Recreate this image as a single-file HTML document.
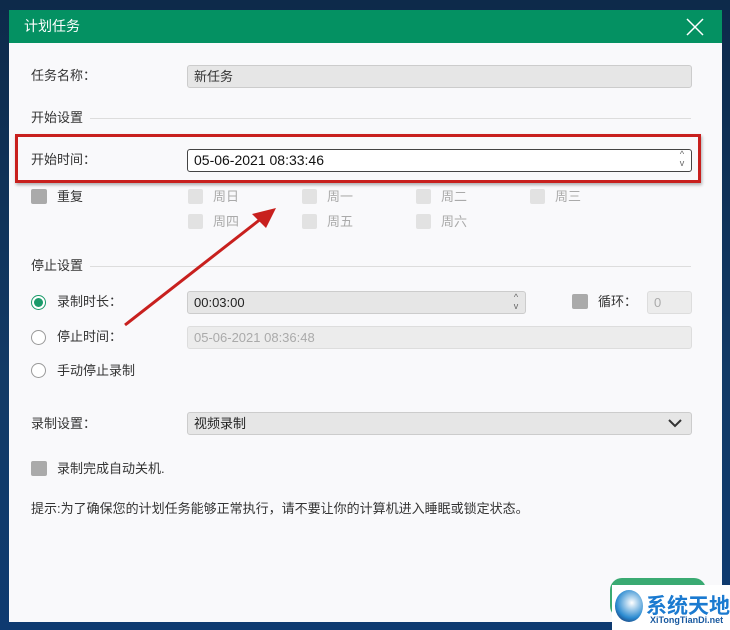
<!DOCTYPE html>
<html><head><meta charset="utf-8"><style>
*{margin:0;padding:0;box-sizing:border-box}
body{width:730px;height:630px;overflow:hidden;background:linear-gradient(180deg,#0d2a4a,#123a66 60%,#0e3a70);font-family:"Liberation Sans","Noto Sans CJK SC",sans-serif;font-size:13px;color:#333;position:relative}
.a{position:absolute}
.dlg{left:9px;top:10px;width:713px;height:612px;background:#f9f9fb}
.hd{left:9px;top:10px;width:713px;height:33px;background:#049162;color:#fff;font-size:14px;line-height:33px;padding-left:15px}
.lbl{line-height:16px}
.inp{border:1px solid #ccc;border-radius:3px;background:#e6e6e6;height:23px;line-height:21px;padding-left:6px}
.cb{width:16px;height:15px;background:#aaa;border-radius:2px}
.cbl{width:15px;height:15px;background:#e2e2e2;border-radius:2px}
.dis{color:#aaa}
.line{height:1px;background:#ddd}
.rd{width:15px;height:15px;border:1px solid #999;border-radius:50%;background:#fff}
.sp{font-size:9px;color:#666;line-height:9px;text-align:center;width:10px}
</style></head><body>
<div class="a dlg"></div>
<div class="a hd">计划任务</div>
<svg class="a" style="left:686px;top:18px" width="18" height="18"><path d="M1 1L17 17M17 1L1 17" stroke="#fff" stroke-width="1.5"/></svg>
<div class="a lbl" style="left:31px;top:68px">任务名称：</div>
<div class="a inp" style="left:187px;top:65px;width:505px">新任务</div>
<div class="a lbl" style="left:31px;top:110px">开始设置</div>
<div class="a line" style="left:90px;top:118px;width:601px"></div>
<div class="a" style="left:15px;top:134px;width:686px;height:49px;border:3px solid #c8201e;box-shadow:1px 2px 3px rgba(0,0,0,.3)"></div>
<div class="a lbl" style="left:31px;top:152px">开始时间：</div>
<div class="a inp" style="left:187px;top:149px;width:505px;background:#fff;border-color:#444;color:#111;font-size:14px">05-06-2021 08:33:46</div>
<div class="a sp" style="left:677px;top:150px">^<br>v</div>
<div class="a cb" style="left:31px;top:189px"></div><div class="a lbl" style="left:57px;top:189px">重复</div>
<div class="a cbl" style="left:188px;top:189px"></div><div class="a lbl dis" style="left:213px;top:189px">周日</div>
<div class="a cbl" style="left:302px;top:189px"></div><div class="a lbl dis" style="left:327px;top:189px">周一</div>
<div class="a cbl" style="left:416px;top:189px"></div><div class="a lbl dis" style="left:441px;top:189px">周二</div>
<div class="a cbl" style="left:530px;top:189px"></div><div class="a lbl dis" style="left:555px;top:189px">周三</div>
<div class="a cbl" style="left:188px;top:214px"></div><div class="a lbl dis" style="left:213px;top:214px">周四</div>
<div class="a cbl" style="left:302px;top:214px"></div><div class="a lbl dis" style="left:327px;top:214px">周五</div>
<div class="a cbl" style="left:416px;top:214px"></div><div class="a lbl dis" style="left:441px;top:214px">周六</div>
<div class="a lbl" style="left:31px;top:258px">停止设置</div>
<div class="a line" style="left:90px;top:266px;width:601px"></div>
<div class="a rd" style="left:31px;top:295px;border-color:#1a9a6a"><div style="width:9px;height:9px;margin:2px;border-radius:50%;background:#1a9a6a"></div></div>
<div class="a lbl" style="left:57px;top:294px">录制时长：</div>
<div class="a inp" style="left:187px;top:291px;width:339px;color:#222">00:03:00</div>
<div class="a sp" style="left:511px;top:293px">^<br>v</div>
<div class="a cb" style="left:572px;top:294px"></div><div class="a lbl" style="left:598px;top:294px">循环：</div>
<div class="a inp dis" style="left:647px;top:291px;width:45px;background:#ececec;border-color:#ddd">0</div>
<div class="a rd" style="left:31px;top:330px"></div>
<div class="a lbl" style="left:57px;top:329px">停止时间：</div>
<div class="a inp dis" style="left:187px;top:326px;width:505px;background:#ececec;border-color:#ddd">05-06-2021 08:36:48</div>
<div class="a rd" style="left:31px;top:363px"></div>
<div class="a lbl" style="left:57px;top:363px">手动停止录制</div>
<div class="a lbl" style="left:31px;top:416px">录制设置：</div>
<div class="a inp" style="left:187px;top:412px;width:505px;color:#222">视频录制</div>
<svg class="a" style="left:668px;top:418px" width="14" height="10"><path d="M1 2L7 8L13 2" stroke="#333" stroke-width="2" fill="none"/></svg>
<div class="a cb" style="left:31px;top:461px"></div><div class="a lbl" style="left:57px;top:461px">录制完成自动关机.</div>
<div class="a lbl" style="left:31px;top:501px">提示:为了确保您的计划任务能够正常执行，请不要让你的计算机进入睡眠或锁定状态。</div>
<svg class="a" style="left:0;top:0" width="730" height="630"><path d="M125 325L262 218" stroke="#c8201e" stroke-width="3"/><path d="M276 208L252 214L266 228Z" fill="#c8201e"/></svg>
<div class="a" style="left:610px;top:578px;width:96px;height:40px;background:#3aaa72;border-radius:12px"></div>
<div class="a" style="left:612px;top:585px;width:118px;height:45px;background:#fff"></div>
<div class="a" style="left:615px;top:590px;width:28px;height:32px;border-radius:50%;background:radial-gradient(circle at 60% 40%,#fff,#2a8ad0 60%,#114)"></div>
<div class="a" style="left:646px;top:590px;font-size:21px;font-weight:bold;color:#1a7ad0">系统天地</div>
<div class="a" style="left:650px;top:615px;font-size:9px;font-weight:bold;color:#1a5aa0">XiTongTianDi.net</div>
</body></html>
